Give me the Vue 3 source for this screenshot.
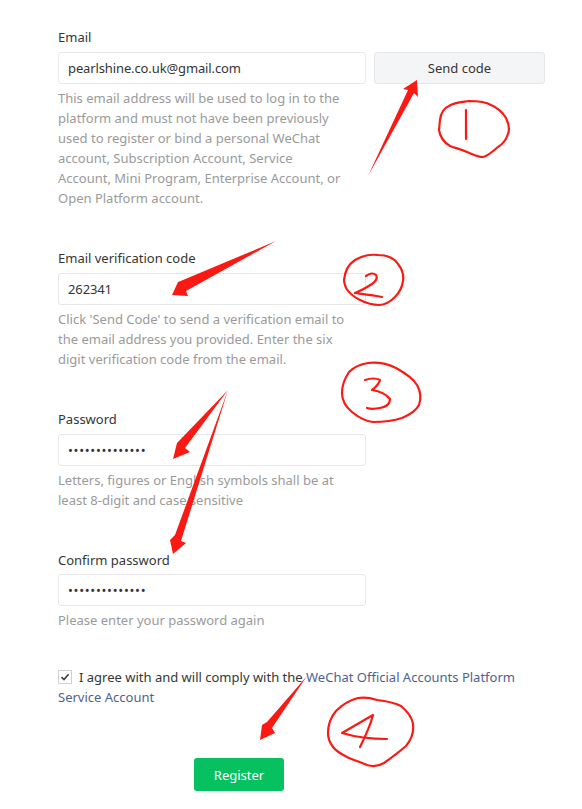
<script setup>
const circles = [
  'M440 120 C441 112 444 108 449 106 C455 102 463 102 469 101 C477 101 486 102 491 105 C498 108 503 113 506 118 C509 124 510 129 508 134 C506 140 503 144 498 147 C493 151 488 156 483 157 C477 157 472 154 467 152 C461 149 455 148 450 146 C445 143 440 137 439 130 Z',
  'M344 280 C345 270 349 264 355 260 C362 256 370 254 378 255 C387 255 394 258 398 264 C402 269 404 275 403 281 C402 288 399 293 395 297 C390 302 385 305 379 305 C372 305 366 303 360 300 C354 297 349 293 346 288 C345 285 344 283 344 280 Z',
  'M342 393 C342 385 345 378 349 372 C354 367 361 364 368 363 C378 362 388 364 396 368 C405 373 413 378 417 385 C421 392 421 399 419 405 C416 411 409 415 402 418 C393 421 383 422 373 422 C365 421 358 417 352 412 C346 407 342 400 342 393 Z',
  'M328 733 C328 725 331 717 336 711 C342 705 350 700 358 698 C365 697 371 698 377 700 C386 701 395 703 401 706 C407 711 412 717 413 724 C414 732 411 740 406 746 C399 752 391 758 384 763 C379 766 373 767 367 765 C360 762 353 760 347 757 C341 754 336 751 333 747 C330 743 328 738 328 733 Z'
]
const strokes = [
  'M466 110 L466 139',
  'M366 276 C370 273 374 273 376 275 C378 278 376 281 372 284 C366 288 360 291 355 293 C363 294 373 295 382 297',
  'M365 380 C371 378 376 378 380 380 C379 384 376 387 372 390 C379 391 386 394 390 399 C390 404 386 407 380 408 C375 409 370 409 367 408',
  'M373 715 L342 733 C352 736 370 739 387 739 M373 715 C370 727 365 737 360 747'
]
const arrows = [
  '368,176 408,90 403,89 417,80 418,97 414,93',
  '276,241 183,280 178,282 172,295 188,296 186,291',
  '228,390 177,443 173,459 190,452 185,448',
  '228,390 175,535 170,540 173,554 186,543 181,541',
  '307,676 267,722 262,725 260,740 275,733 272,728'
]
</script>

<template>
  <main class="page">
    <section class="field first">
      <label class="label" for="email">Email</label>
      <div class="row">
        <input id="email" class="input" type="text" value="pearlshine.co.uk@gmail.com" />
        <button class="send" type="button">Send code</button>
      </div>
      <p class="help">This email address will be used to log in to the platform and must not have been previously used to register or bind a personal WeChat account, Subscription Account, Service Account, Mini Program, Enterprise Account, or Open Platform account.</p>
    </section>

    <section class="field code">
      <label class="label" for="code">Email verification code</label>
      <input id="code" class="input" type="text" value="262341" />
      <p class="help">Click 'Send Code' to send a verification email to the email address you provided. Enter the six digit verification code from the email.</p>
    </section>

    <section class="field password">
      <label class="label" for="password">Password</label>
      <input id="password" class="input secret" type="password" value="abcdefghijklmn" />
      <p class="help">Letters, figures or English symbols shall be at least 8-digit and case sensitive</p>
    </section>

    <section class="field confirm">
      <label class="label tight" for="confirm">Confirm password</label>
      <input id="confirm" class="input secret" type="password" value="abcdefghijklmn" />
      <p class="help">Please enter your password again</p>
    </section>

    <div class="agree">
      <span class="check">
        <svg width="12" height="12" viewBox="0 0 12 12"><path d="M2.5 6.2 L5 8.6 L9.6 3.2" fill="none" stroke="#444" stroke-width="1.7" /></svg>
      </span>
      <span class="agree-text">I agree with and will comply with the <a class="link">WeChat Official Accounts Platform Service Account</a></span>
    </div>

    <div class="actions">
      <button class="register" type="button">Register</button>
    </div>

    <svg class="marks" width="582" height="809" viewBox="0 0 582 809">
      <path v-for="(d, i) in circles" :key="'c' + i" :d="d" class="ink" />
      <path v-for="(d, i) in strokes" :key="'s' + i" :d="d" class="ink" />
      <polygon v-for="(p, i) in arrows" :key="'a' + i" :points="p" fill="#fb1a13" />
    </svg>
  </main>
</template>

<style scoped>
.page {
  position: relative;
  width: 582px;
  height: 809px;
  box-sizing: border-box;
  padding: 27px 0 0 58px;
  overflow: hidden;
  background: #fff;
  font-family: "Noto Sans", "Open Sans", sans-serif;
  font-size: 13px;
  line-height: 20px;
  color: #353535;
}
.field { display: flex; flex-direction: column; align-items: flex-start; }
.code { margin-top: 40px; }
.password { margin-top: 40px; }
.confirm { margin-top: 40px; }
.label { display: block; margin-bottom: 5px; }
.label.tight { margin-bottom: 4px; }
.row { display: flex; gap: 8px; }
.input {
  box-sizing: border-box;
  width: 308px;
  height: 32px;
  padding: 0 9px;
  border: 1px solid #e7e7eb;
  border-radius: 3px;
  background: #fff;
  font: inherit;
  letter-spacing: -0.12px;
  color: #353535;
  outline: none;
}
.secret { letter-spacing: 0.7px; }
.send {
  box-sizing: border-box;
  width: 171px;
  height: 32px;
  padding: 0;
  border: 1px solid #e7e7eb;
  border-radius: 3px;
  background: #f4f5f7;
  font: inherit;
  color: #353535;
}
.help { width: 288px; margin: 4px 0 0; color: #9a9a9a; }
.agree { position: relative; width: 470px; margin-top: 37px; }
.check {
  position: absolute;
  left: 0;
  top: 3px;
  width: 14px;
  height: 14px;
  box-sizing: border-box;
  border: 1px solid #d0d0d0;
  display: flex;
  align-items: center;
  justify-content: center;
}
.check svg { flex: none; }
.agree-text { text-indent: 21px; display: block; }
.link { color: #505f92; }
.actions { width: 362px; margin-top: 51px; display: flex; justify-content: center; }
.register {
  width: 90px;
  height: 33px;
  padding: 0;
  border: 0;
  border-radius: 3px;
  background: #07c160;
  color: #fff;
  font: inherit;
}
.marks { position: absolute; left: 0; top: 0; pointer-events: none; }
.ink { fill: none; stroke: #fb1a13; stroke-width: 2.2; stroke-linejoin: round; stroke-linecap: round; }
</style>
